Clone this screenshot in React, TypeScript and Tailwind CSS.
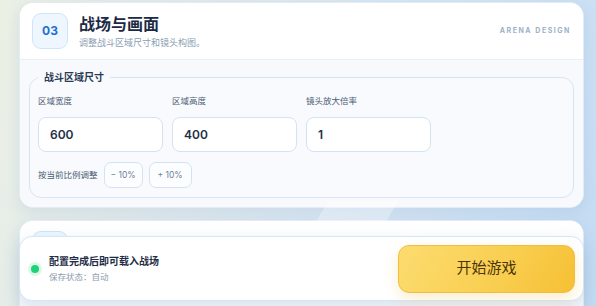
import React from "react";

function Field({ label, value }: { label: string; value: string }) {
  return (
    <div className="flex flex-col">
      <label className="mt-[11px] mb-[10px] text-[8.5px] leading-[12px] text-[#4a5c74]">{label}</label>
      <input
        readOnly
        value={value}
        className="w-[125px] h-[35px] rounded-[8px] border border-[#d3e3f2] bg-white px-[11px] text-[12px] font-semibold text-[#1f2f47] outline-none"
      />
    </div>
  );
}

export default function App() {
  return (
    <div className="relative w-[596px] h-[306px] overflow-hidden font-['Inter','Noto_Sans_CJK_SC',sans-serif] bg-[linear-gradient(110deg,#ebf0e4_0%,#e0eaee_35%,#d4e5f3_65%,#c3dcf4_100%)]">
      {/* decorative light band */}
      <div className="absolute left-[320px] top-[200px] w-[70px] h-[30px] bg-white/30 -skew-x-[30deg]" />

      <main className="flex flex-col gap-[12px] pt-[2px] pl-[19px] pr-[12px]">
        {/* Card 1 */}
        <section className="rounded-[14px] border border-[#e2ecf6] bg-white shadow-[0_4px_14px_rgba(120,150,190,0.18)] overflow-hidden">
          <header className="h-[57px] flex items-center gap-[11px] px-[12px] border-b border-[#e8eff6] bg-white">
            <div className="w-[36px] h-[36px] rounded-[9px] bg-[#eef7ff] border border-[#cde4fa] flex items-center justify-center text-[12px] font-bold text-[#1f6fcf]">
              03
            </div>
            <div className="flex flex-col">
              <h2 className="text-[16px] leading-[20px] font-bold text-[#1b2a44]">战场与画面</h2>
              <p className="mt-[3px] text-[9px] leading-[12px] text-[#8a9db3]">调整战斗区域尺寸和镜头构图。</p>
            </div>
            <span className="ml-auto mt-[1px] text-[7px] font-bold tracking-[0.22em] text-[#9db1c7]">ARENA DESIGN</span>
          </header>
          <div className="bg-[#f7f9fc] pt-[10px] px-[9px] pb-[9px]">
            <fieldset className="rounded-[12px] border border-[#d6e5f3] bg-[#f8fafd] px-[8px] pb-[9px]">
              <legend className="px-[6px] text-[10px] leading-[14px] font-bold text-[#2b3b55]">战斗区域尺寸</legend>
              <div className="flex gap-[9px]">
                <Field label="区域宽度" value="600" />
                <Field label="区域高度" value="400" />
                <Field label="镜头放大倍率" value="1" />
              </div>
              <div className="mt-[10px] flex items-center gap-[6px]">
                <span className="text-[8.5px] text-[#4a5c74]">按当前比例调整</span>
                <button className="w-[39px] h-[26px] rounded-[7px] border border-[#d3e3f2] bg-[#fbfdff] text-[8.5px] text-[#6f8299]">
                  − 10%
                </button>
                <button className="w-[43px] h-[26px] rounded-[7px] border border-[#d3e3f2] bg-[#fbfdff] text-[8.5px] text-[#6f8299]">
                  + 10%
                </button>
              </div>
            </fieldset>
          </div>
        </section>

        {/* Card 2 (mostly under the footer) */}
        <section className="rounded-[14px] border border-[#e2ecf6] bg-white shadow-[0_4px_14px_rgba(120,150,190,0.18)] overflow-hidden">
          <header className="h-[57px] flex items-center gap-[11px] px-[12px] border-b border-[#e8eff6] bg-white">
            <div className="w-[36px] h-[36px] rounded-[9px] bg-[#eef7ff] border border-[#cde4fa]" />
          </header>
          <div className="bg-[#f7f9fc] h-[80px]" />
        </section>
      </main>

      {/* Floating footer */}
      <div className="absolute left-[19px] top-[236px] w-[565px] h-[65px] rounded-[13px] border border-[#d5e6f5] bg-white shadow-[0_6px_18px_rgba(110,140,180,0.22)] flex items-center px-[8px]">
        <div className="w-[14px] h-[14px] rounded-full bg-[#dcf7e8] flex items-center justify-center">
          <div className="w-[8px] h-[8px] rounded-full bg-[#1fd27a]" />
        </div>
        <div className="ml-[7px] flex flex-col">
          <span className="text-[10px] leading-[14px] font-bold text-[#1e2d45]">配置完成后即可载入战场</span>
          <span className="mt-[3px] text-[8.5px] leading-[12px] text-[#8c9cb0]">保存状态：自动</span>
        </div>
        <button className="ml-auto w-[177px] h-[48px] rounded-[11px] border border-[#f2bd3c] bg-[linear-gradient(120deg,#fcdc70_0%,#f9cf52_55%,#f6c034_100%)] shadow-[0_6px_14px_rgba(240,190,70,0.25)] text-[15px] text-[#4d3508]">
          开始游戏
        </button>
      </div>
    </div>
  );
}
